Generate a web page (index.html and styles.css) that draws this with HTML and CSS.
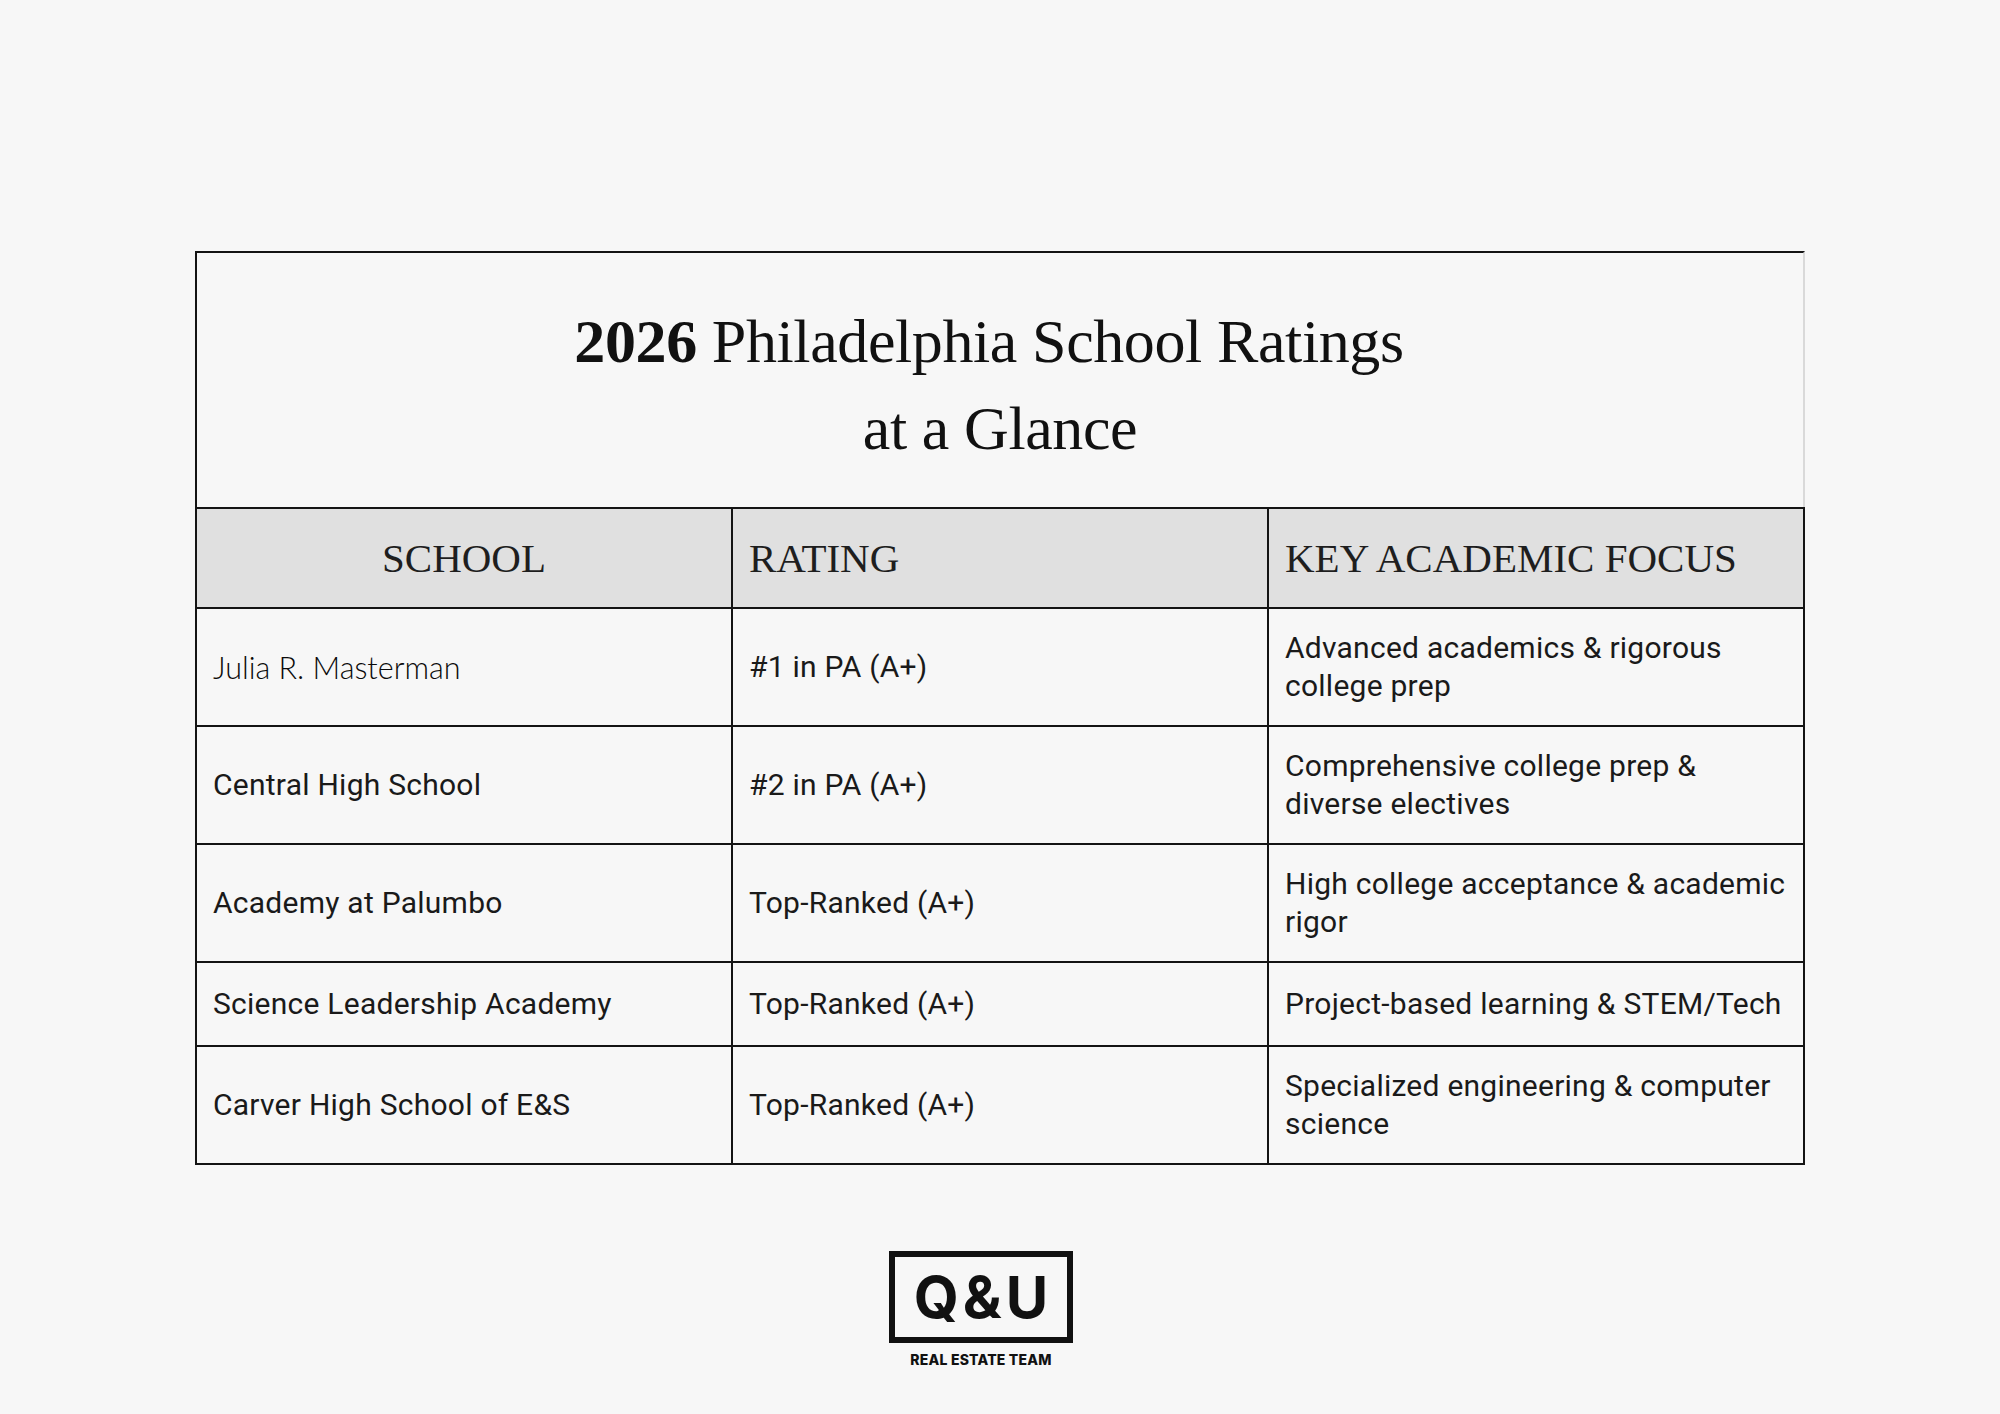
FILE: index.html
```html
<!DOCTYPE html>
<html lang="en">
<head>
<meta charset="utf-8">
<title>2026 Philadelphia School Ratings at a Glance</title>
<link rel="stylesheet" href="styles.css">
</head>
<body>
<div class="page">
  <div class="title-box">
    <h1 class="title"><span class="line-one"><span class="year">2026</span> Philadelphia School Ratings</span><br>at a Glance</h1>
  </div>
  <table class="ratings">
    <colgroup><col class="c"><col class="c"><col class="c"></colgroup>
    <thead>
      <tr>
        <th class="center">SCHOOL</th>
        <th>RATING</th>
        <th>KEY ACADEMIC FOCUS</th>
      </tr>
    </thead>
    <tbody>
      <tr>
        <td class="light">Julia R. Masterman</td>
        <td>#1 in PA (A+)</td>
        <td>Advanced academics &amp; rigorous<br>college prep</td>
      </tr>
      <tr>
        <td>Central High School</td>
        <td>#2 in PA (A+)</td>
        <td>Comprehensive college prep &amp;<br>diverse electives</td>
      </tr>
      <tr>
        <td>Academy at Palumbo</td>
        <td>Top-Ranked (A+)</td>
        <td>High college acceptance &amp; academic<br>rigor</td>
      </tr>
      <tr class="short">
        <td>Science Leadership Academy</td>
        <td>Top-Ranked (A+)</td>
        <td>Project-based learning &amp; STEM/Tech</td>
      </tr>
      <tr>
        <td>Carver High School of E&amp;S</td>
        <td>Top-Ranked (A+)</td>
        <td>Specialized engineering &amp; computer<br>science</td>
      </tr>
    </tbody>
  </table>
  <div class="logo">
    <div class="logo-box">Q&amp;U</div>
    <div class="logo-sub">REAL ESTATE TEAM</div>
  </div>
</div>
</body>
</html>
```

FILE: styles.css
```css
html, body {
  margin: 0;
  padding: 0;
  background: #f7f7f7;
}

.page {
  width: 1610px;
  margin: 0 auto;
  padding-top: 251px;
}

.title-box {
  box-sizing: border-box;
  height: 256px;
  border-top: 2px solid #141414;
  border-left: 2px solid #141414;
  border-right: 2px solid #d9d9d9;
  padding-top: 45px;
  text-align: center;
}

.title {
  margin: 0;
  font-family: "Liberation Serif", "Times New Roman", serif;
  font-weight: 400;
  font-size: 62px;
  line-height: 87px;
  letter-spacing: -0.4px;
  color: #111;
}

.line-one {
  margin-right: 22px;
}

.year {
  font-weight: 700;
}

.ratings {
  width: 1610px;
  border-collapse: collapse;
  table-layout: fixed;
}

.ratings th,
.ratings td {
  border: 2px solid #141414;
}

.ratings th {
  height: 98px;
  padding: 0 16px;
  background: #e0e0e0;
  font-family: "Liberation Serif", "Times New Roman", serif;
  font-weight: 400;
  font-size: 41px;
  text-align: left;
  color: #1e1e1e;
  vertical-align: middle;
}

.ratings th.center {
  text-align: center;
}

.ratings td {
  padding: 20px 16px;
  font-family: Roboto, "Noto Sans", sans-serif;
  font-size: 30px;
  line-height: 38px;
  letter-spacing: 0.25px;
  color: #1a1a1a;
  vertical-align: middle;
  white-space: nowrap;
}

.ratings tr.short td {
  padding-top: 22px;
  padding-bottom: 22px;
}

.ratings td.light {
  font-family: Lato, Roboto, sans-serif;
  font-weight: 300;
  font-size: 30.5px;
  letter-spacing: 0;
  color: #0a0a0a;
}

.logo {
  width: 184px;
  margin: 86px 0 0 694px;
  display: flex;
  flex-direction: column;
  align-items: center;
}

.logo-box {
  box-sizing: border-box;
  width: 184px;
  height: 92px;
  border: 6px solid #111;
  display: flex;
  align-items: center;
  justify-content: center;
  font-family: Inter, "Liberation Sans", sans-serif;
  font-weight: 700;
  font-size: 58px;
  letter-spacing: 4px;
  padding-left: 4px;
  color: #111;
}

.logo-sub {
  margin-top: 8px;
  font-family: Inter, "Liberation Sans", sans-serif;
  font-weight: 800;
  font-size: 14px;
  letter-spacing: 0.2px;
  color: #111;
}
```
